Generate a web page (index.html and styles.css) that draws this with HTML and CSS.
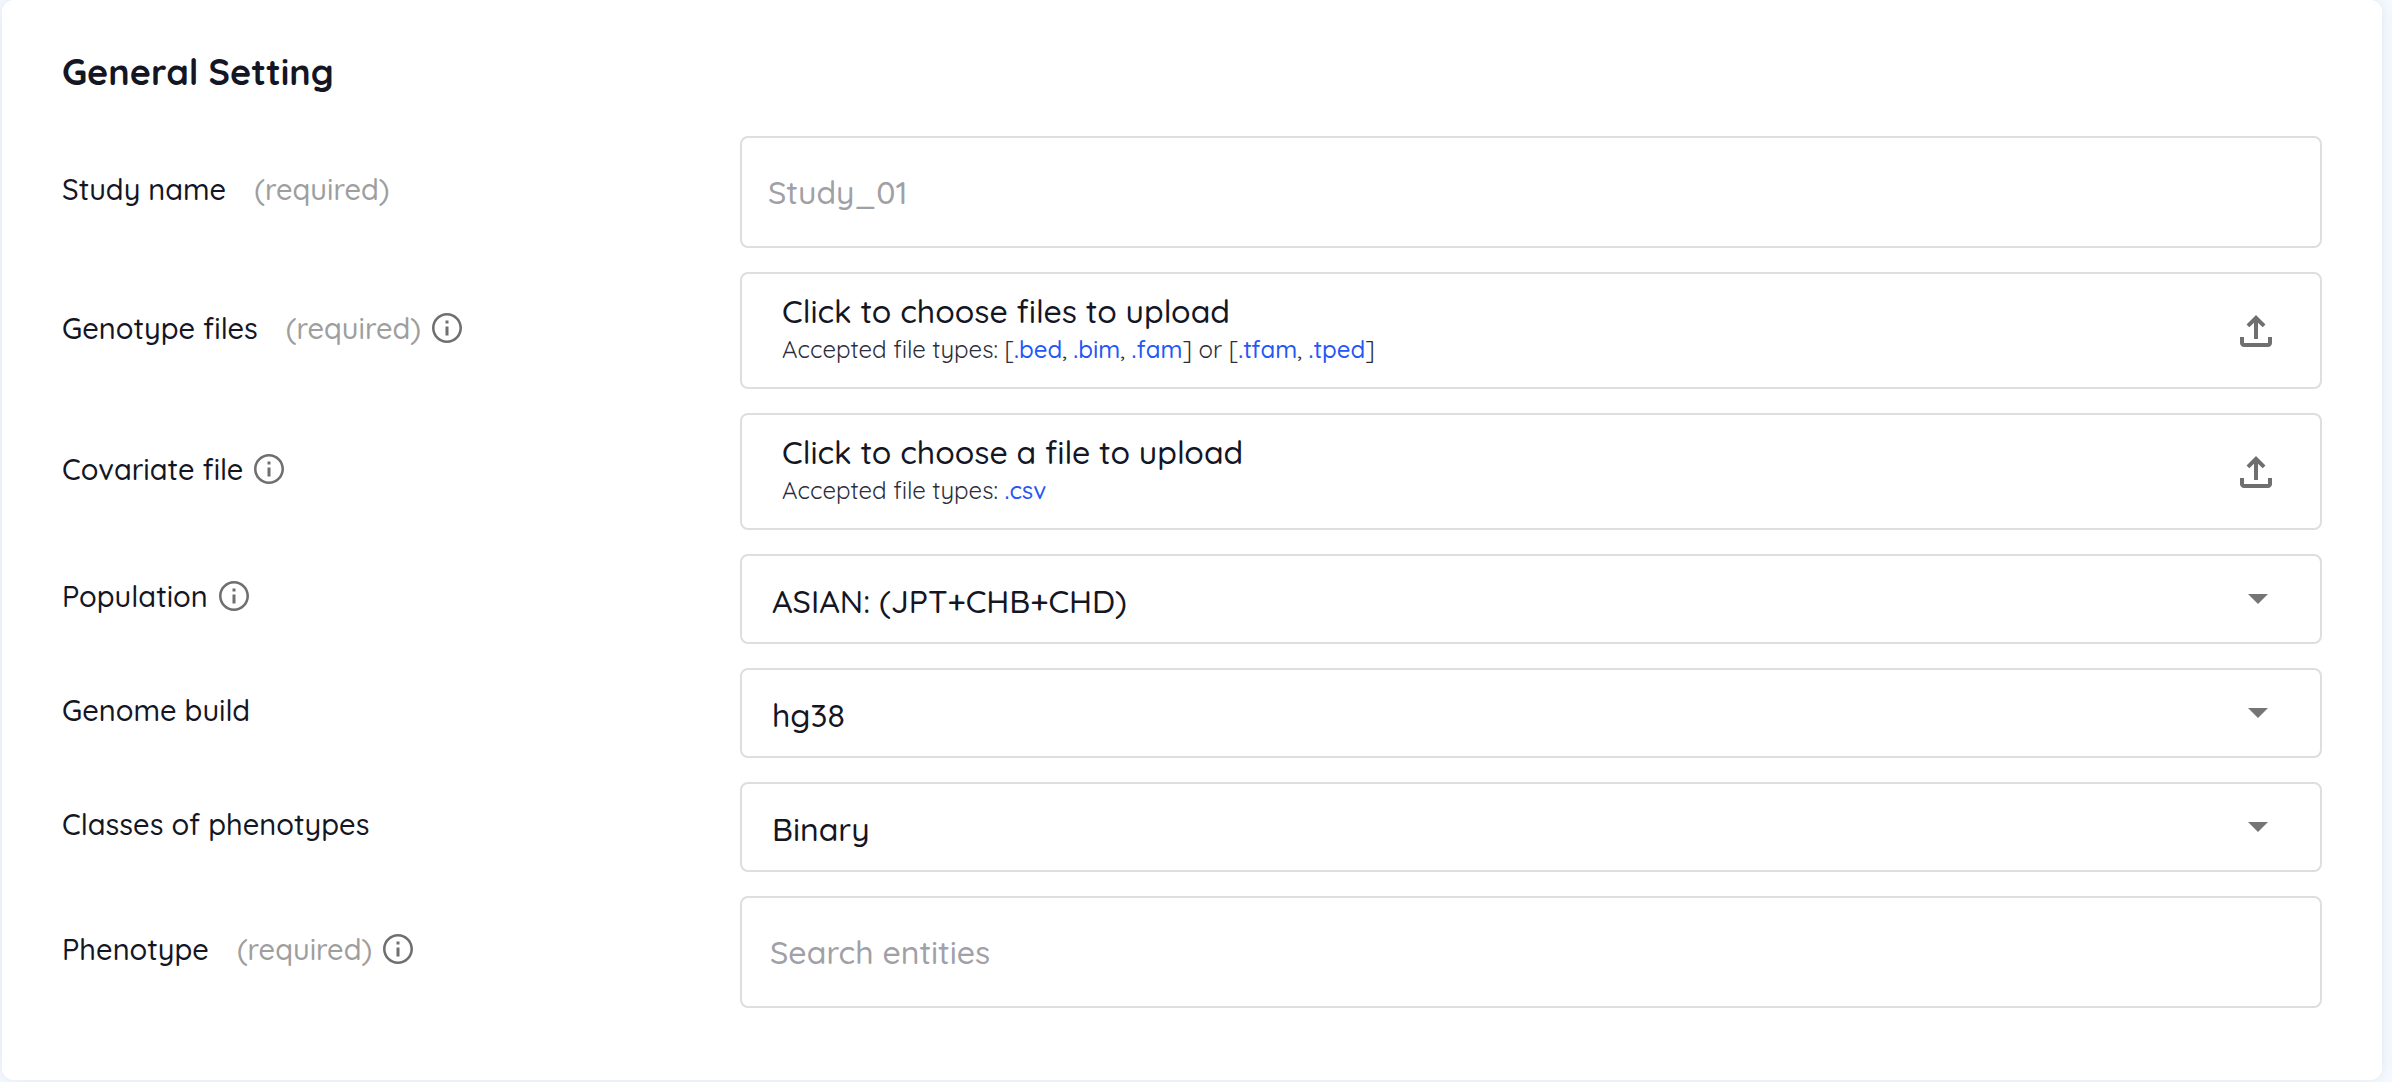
FILE: index.html
```html
<!DOCTYPE html>
<html lang="en">
<head>
  <meta charset="utf-8">
  <meta name="viewport" content="width=device-width, initial-scale=1">
  <title>General Setting</title>
  <link rel="stylesheet" href="styles.css">
</head>
<body>
  <svg class="sprite" aria-hidden="true">
    <symbol id="icon-info" viewBox="0 0 24 24">
      <path d="M11 7h2v2h-2zm0 4h2v6h-2zm1-9C6.480 2 2 6.480 2 12s4.480 10 10 10 10-4.480 10-10S17.520 2 12 2zm0 18.300c-4.580 0-8.300-3.720-8.300-8.300S7.420 3.700 12 3.700s8.300 3.720 8.300 8.300-3.720 8.300-8.300 8.300z"/>
    </symbol>
    <symbol id="icon-upload" viewBox="0 0 32 32">
      <path d="M14 24V7.700l-4.700 4.600L6.500 9.500 16 0l9.500 9.500-2.800 2.800L18 7.700V24zM4 32q-1.650 0-2.825-1.175T0 28v-6h4v6h24v-6h4v6q0 1.650-1.175 2.825T28 32z"/>
    </symbol>
    <symbol id="icon-caret" viewBox="0 0 20 10">
      <path d="M0 0h20L10 10z"/>
    </symbol>
  </svg>

  <main class="card">
    <h2 class="card-title">General Setting</h2>
    <form class="form">
      <div class="row">
        <div class="row-label">
          <label for="study-name">Study name<span class="required">(required)</span></label>
        </div>
        <input class="field text-field" id="study-name" type="text" placeholder="Study_01">
      </div>

      <div class="row">
        <div class="row-label">
          <label for="genotype-files">Genotype files<span class="required">(required)</span></label>
          <button class="info" type="button" aria-label="About genotype files"><svg class="info-icon"><use href="#icon-info"/></svg></button>
        </div>
        <button class="field upload" id="genotype-files" type="button">
          <span class="upload-text">
            <span class="upload-title">Click to choose files to upload</span>
            <span class="upload-hint">Accepted file types: [<span class="ext">.bed</span>, <span class="ext">.bim</span>, <span class="ext">.fam</span>] or [<span class="ext">.tfam</span>, <span class="ext">.tped</span>]</span>
          </span>
          <svg class="upload-icon" aria-hidden="true"><use href="#icon-upload"/></svg>
        </button>
      </div>

      <div class="row">
        <div class="row-label">
          <label for="covariate-file">Covariate file</label>
          <button class="info" type="button" aria-label="About the covariate file"><svg class="info-icon"><use href="#icon-info"/></svg></button>
        </div>
        <button class="field upload" id="covariate-file" type="button">
          <span class="upload-text">
            <span class="upload-title">Click to choose a file to upload</span>
            <span class="upload-hint">Accepted file types: <span class="ext">.csv</span></span>
          </span>
          <svg class="upload-icon" aria-hidden="true"><use href="#icon-upload"/></svg>
        </button>
      </div>

      <div class="row">
        <div class="row-label">
          <label for="population">Population</label>
          <button class="info" type="button" aria-label="About population"><svg class="info-icon"><use href="#icon-info"/></svg></button>
        </div>
        <div class="select">
          <select class="field select-field" id="population"><option>ASIAN: (JPT+CHB+CHD)</option></select>
          <svg class="caret" aria-hidden="true"><use href="#icon-caret"/></svg>
        </div>
      </div>

      <div class="row">
        <div class="row-label"><label for="genome-build">Genome build</label></div>
        <div class="select">
          <select class="field select-field" id="genome-build"><option>hg38</option></select>
          <svg class="caret" aria-hidden="true"><use href="#icon-caret"/></svg>
        </div>
      </div>

      <div class="row">
        <div class="row-label"><label for="phenotype-class">Classes of phenotypes</label></div>
        <div class="select">
          <select class="field select-field" id="phenotype-class"><option>Binary</option></select>
          <svg class="caret" aria-hidden="true"><use href="#icon-caret"/></svg>
        </div>
      </div>

      <div class="row">
        <div class="row-label">
          <label for="phenotype">Phenotype<span class="required">(required)</span></label>
          <button class="info" type="button" aria-label="About phenotype"><svg class="info-icon"><use href="#icon-info"/></svg></button>
        </div>
        <input class="field text-field search-field" id="phenotype" type="text" placeholder="Search entities">
      </div>
    </form>
  </main>
</body>
</html>
```
FILE: styles.css
```css
* {
  box-sizing: border-box;
}

body {
  margin: 0;
  padding: 0 10px 2px 2px;
  background: #f5f9ff;
  color: #141624;
  font-family: Quicksand, Inter, sans-serif;
  font-weight: 500;
}

.sprite {
  display: none;
}

.card {
  padding: 48px 60px 72px;
  border-radius: 12px;
  background: #fff;
  box-shadow: 0 0 12px rgba(60, 80, 100, 0.1);
}

.card-title {
  margin: 0 0 40px;
  font-size: 36px;
  line-height: 48px;
  font-weight: 700;
}

.form {
  display: grid;
  gap: 24px;
}

.row {
  display: grid;
  grid-template-columns: 30% 70%;
  align-items: center;
}

.row-label {
  display: flex;
  align-items: center;
  gap: 8px;
  padding-bottom: 6px;
  font-size: 29px;
  line-height: 36px;
}

.required {
  margin-left: 28px;
  color: #9e9e9e;
}

.info {
  display: flex;
  padding: 0;
  border: 0;
  background: none;
  color: #6f6f6f;
}

.info-icon {
  width: 36px;
  height: 36px;
  fill: currentColor;
}

.field {
  width: 100%;
  margin: 0;
  border: 2px solid #dedede;
  border-radius: 8px;
  background: #fff;
  color: inherit;
  font-family: inherit;
  font-size: 32px;
  font-weight: 500;
}

.text-field {
  height: 112px;
  padding: 0 26px;
}

.search-field {
  padding: 0 28px;
}

.text-field::placeholder {
  color: #a0a0a6;
  opacity: 1;
}

.upload {
  display: flex;
  align-items: center;
  justify-content: space-between;
  padding: 0 48px 0 40px;
  text-align: left;
}

.upload-text {
  display: grid;
  padding: 15px 0 22px;
}

.upload-title {
  line-height: 44px;
}

.upload-hint {
  color: #2c2d3a;
  font-size: 24px;
  font-weight: 400;
  line-height: 32px;
}

.ext {
  color: #2457f5;
  font-weight: 500;
}

.upload-icon {
  width: 32px;
  height: 32px;
  fill: #6f6f6f;
}

.select {
  display: grid;
  align-items: center;
}

.select > * {
  grid-area: 1 / 1;
}

.select-field {
  height: 90px;
  padding: 4px 88px 0 30px;
  appearance: none;
}

.caret {
  justify-self: end;
  width: 20px;
  height: 10px;
  margin-right: 54px;
  fill: #757575;
  pointer-events: none;
}
```
